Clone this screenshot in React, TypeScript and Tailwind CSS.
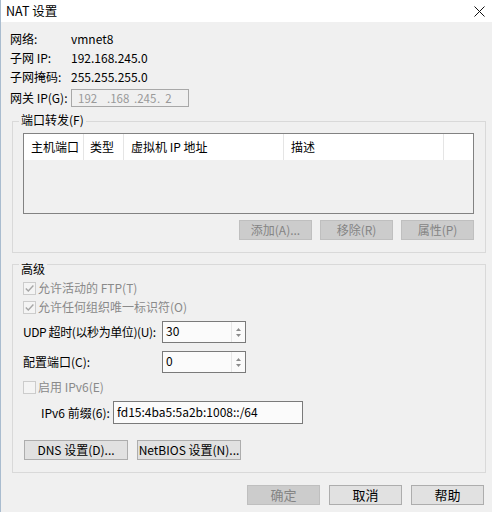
import React from "react";

const font = "font-['Noto_Sans_CJK_SC',sans-serif]";

function Btn({ label, disabled, className }: { label: string; disabled?: boolean; className: string }) {
  return (
    <div
      className={
        disabled
          ? `flex items-center justify-center whitespace-nowrap border border-[#bfbfbf] bg-[#cccccc] text-[#848484] ${className}`
          : `flex items-center justify-center whitespace-nowrap border border-[#adadad] bg-[#e1e1e1] text-black ${className}`
      }
    >
      {label}
    </div>
  );
}

function CheckBox({ label, checked }: { label: string; checked?: boolean }) {
  return (
    <div className="flex h-[16px] items-center text-[#8a8a8a]">
      <div className="flex h-[13px] w-[13px] items-center justify-center border border-[#cccccc] bg-[#f4f4f4]">
        {checked && (
          <svg width="11" height="11" viewBox="0 0 11 11">
            <path d="M1.8 5.6 L4.3 8.1 L9.4 2.6" fill="none" stroke="#a6a6a6" strokeWidth="1.4" />
          </svg>
        )}
      </div>
      <span className="ml-[2px]">{label}</span>
    </div>
  );
}

function Spin({ value }: { value: string }) {
  return (
    <div className="ml-auto flex h-[22px] w-[84px] shrink-0 border border-[#7a7a7a] bg-[#fbfbfb]">
      <span className="flex-1 pl-[3px] leading-[18px]">{value}</span>
      <div className="flex w-[14px] flex-col items-center justify-center gap-[3px] border-l border-[#e6e6e6]">
        <svg width="5" height="3" viewBox="0 0 5 3">
          <path d="M0 3 L2.5 0 L5 3 Z" fill="#8c8c8c" />
        </svg>
        <svg width="5" height="3" viewBox="0 0 5 3">
          <path d="M0 0 L2.5 3 L5 0 Z" fill="#8c8c8c" />
        </svg>
      </div>
    </div>
  );
}

export default function App() {
  return (
    <div className={`relative h-[512px] w-[492px] overflow-hidden border-l border-[#a9bccf] bg-[#f0f0f0] text-[12px] leading-[16px] text-black ${font}`}>
      {/* title bar */}
      <div className="flex h-[22px] items-center justify-between bg-white pl-[5px] pr-[7px]">
        <span className="text-[12.5px]">NAT 设置</span>
        <svg width="11" height="11" viewBox="0 0 11 11">
          <path d="M0.5 0.5 L10.5 10.5 M10.5 0.5 L0.5 10.5" stroke="#111" strokeWidth="1" />
        </svg>
      </div>

      <div className="pl-[9px] pr-[7px]">
        {/* network info */}
        <div className="mt-[7px] flex h-[19px] items-center">
          <span className="w-[61px]">网络:</span>
          <span>vmnet8</span>
        </div>
        <div className="flex h-[19px] items-center">
          <span className="w-[61px]">子网 IP:</span>
          <span>192.168.245.0</span>
        </div>
        <div className="flex h-[19px] items-center">
          <span className="w-[61px]">子网掩码:</span>
          <span>255.255.255.0</span>
        </div>
        <div className="mt-[3px] flex h-[18px] items-center">
          <span className="w-[61px]">网关 IP(G):</span>
          <div className="flex h-[18px] w-[118px] items-center whitespace-pre border border-[#a8a8a8] bg-[#f0f0f0] pl-[6px] text-[11.5px] text-[#9a9a9a]">
            <span className="w-[29px] shrink-0">192</span>
            <span className="w-[27px] shrink-0">.168</span>
            <span className="w-[23px] shrink-0">.245</span>
            <span>.  2</span>
          </div>
        </div>

        {/* port forwarding group */}
        <div className="relative ml-[2px] mt-[14px] h-[132px] w-[474px] border border-[#d9d9d9] pl-[10px] pt-[11px]">
          <span className="absolute left-[6px] top-[-10px] bg-[#f0f0f0] px-[2px]">端口转发(F)</span>
          <div className="h-[81px] w-[451px] border border-[#828282] bg-[#f0f0f0]">
            <div className="flex h-[26px] items-center bg-white">
              <span className="h-full w-[60px] border-r border-[#e5e5e5] pl-[7px] leading-[26px]">主机端口</span>
              <span className="h-full w-[40px] border-r border-[#e5e5e5] pl-[6px] leading-[26px]">类型</span>
              <span className="h-full w-[160px] border-r border-[#e5e5e5] pl-[7px] leading-[26px]">虚拟机 IP 地址</span>
              <span className="h-full w-[160px] border-r border-[#e5e5e5] pl-[7px] leading-[26px]">描述</span>
            </div>
          </div>
          <div className="mt-[6px] flex w-[451px] justify-end gap-[8px]">
            <Btn label="添加(A)..." disabled className="h-[20px] w-[73px]" />
            <Btn label="移除(R)" disabled className="h-[20px] w-[73px]" />
            <Btn label="属性(P)" disabled className="h-[20px] w-[73px]" />
          </div>
        </div>

        {/* advanced group */}
        <div className="relative ml-[2px] mt-[11px] h-[209px] w-[474px] border border-[#d9d9d9] pl-[10px] pt-[15px]">
          <span className="absolute left-[6px] top-[-4px] bg-[#f0f0f0] px-[2px]">高级</span>
          <CheckBox label="允许活动的 FTP(T)" checked />
          <div className="mt-[3px]">
            <CheckBox label="允许任何组织唯一标识符(O)" checked />
          </div>
          <div className="mt-[6px] flex h-[22px] w-[223px] items-center">
            <span className="whitespace-nowrap tracking-[-0.4px]">UDP 超时(以秒为单位)(U):</span>
            <Spin value="30" />
          </div>
          <div className="mt-[8px] flex h-[22px] w-[223px] items-center">
            <span className="whitespace-nowrap">配置端口(C):</span>
            <Spin value="0" />
          </div>
          <div className="mt-[6px]">
            <CheckBox label="启用 IPv6(E)" />
          </div>
          <div className="mt-[6px] flex h-[23px] items-center pl-[18px]">
            <span className="w-[72px]">IPv6 前缀(6):</span>
            <div className="h-[23px] w-[190px] border border-[#7a7a7a] bg-[#fbfbfb] pl-[3px] leading-[20px]">
              fd15:4ba5:5a2b:1008::/64
            </div>
          </div>
          <div className="mt-[16px] flex gap-[9px] pl-[1px]">
            <Btn label="DNS 设置(D)..." className="h-[20px] w-[104px]" />
            <Btn label="NetBIOS 设置(N)..." className="h-[20px] w-[104px]" />
          </div>
        </div>

        {/* dialog buttons */}
        <div className="mt-[12px] flex justify-end gap-[9px] pr-[1px]">
          <Btn label="确定" disabled className="h-[20px] w-[73px] text-[13px]" />
          <Btn label="取消" className="h-[20px] w-[73px] text-[13px]" />
          <Btn label="帮助" className="h-[20px] w-[73px] text-[13px]" />
        </div>
      </div>
    </div>
  );
}
